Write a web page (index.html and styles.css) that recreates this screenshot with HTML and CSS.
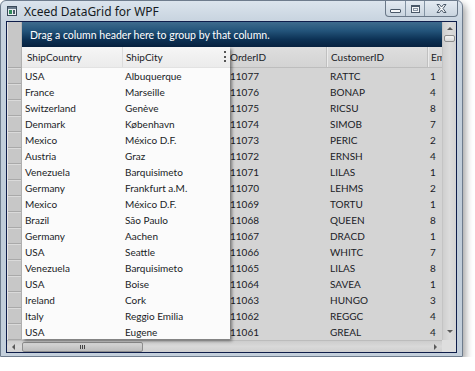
FILE: index.html
```html
<!DOCTYPE html>
<html>
<head>
<meta charset="utf-8">
<link rel="stylesheet" href="styles.css">
</head>
<body>
<div class="window">
  <div class="titlebar">
    <svg class="app-icon" width="10" height="10" viewBox="0 0 10 10">
      <rect x="0.5" y="0.5" width="9" height="9" fill="#e8eef2" stroke="#3a4a5a"/>
      <rect x="1" y="1" width="8" height="2" fill="#6a7a8a"/>
      <rect x="2" y="4" width="3" height="4" fill="#2f8a5a"/>
      <rect x="6" y="4" width="2" height="4" fill="#4a5a6a"/>
    </svg>
    <span class="title">Xceed DataGrid for WPF</span>
    <div class="caption">
      <div class="cbtn min"><span class="min-glyph"></span></div>
      <div class="cbtn max"><span class="max-glyph"></span></div>
      <div class="cbtn close">
        <svg width="11" height="9" viewBox="0 0 11 9">
          <path d="M1 0.5 L3.5 0.5 L5.5 3 L7.5 0.5 L10 0.5 L7 4.5 L10 8.5 L7.5 8.5 L5.5 6 L3.5 8.5 L1 8.5 L4 4.5 Z" fill="#f4f6f8" stroke="#4a5868" stroke-width="1" stroke-linejoin="round"/>
        </svg>
      </div>
    </div>
  </div>
  <div class="client">
    <div class="selectors">
      <div class="sel-top"></div>
      <div class="sel-head"></div>
      <div class="sel"></div><div class="sel"></div><div class="sel"></div><div class="sel"></div>
      <div class="sel"></div><div class="sel"></div><div class="sel"></div><div class="sel"></div>
      <div class="sel"></div><div class="sel"></div><div class="sel"></div><div class="sel"></div>
      <div class="sel"></div><div class="sel"></div><div class="sel"></div><div class="sel"></div>
      <div class="sel"></div>
    </div>
    <div class="group-panel">Drag a column header here to group by that column.</div>
    <div class="main-head">
      <div class="mh spacer"></div>
      <div class="mh c-order">OrderID</div>
      <div class="mh c-cust">CustomerID</div>
      <div class="mh c-em">Em</div>
    </div>
    <div class="main-rows">
      <div class="mrow"><span class="spacer"></span><span class="c-order">11077</span><span class="c-cust">RATTC</span><span class="c-em">1</span></div>
      <div class="mrow"><span class="spacer"></span><span class="c-order">11076</span><span class="c-cust">BONAP</span><span class="c-em">4</span></div>
      <div class="mrow"><span class="spacer"></span><span class="c-order">11075</span><span class="c-cust">RICSU</span><span class="c-em">8</span></div>
      <div class="mrow"><span class="spacer"></span><span class="c-order">11074</span><span class="c-cust">SIMOB</span><span class="c-em">7</span></div>
      <div class="mrow"><span class="spacer"></span><span class="c-order">11073</span><span class="c-cust">PERIC</span><span class="c-em">2</span></div>
      <div class="mrow"><span class="spacer"></span><span class="c-order">11072</span><span class="c-cust">ERNSH</span><span class="c-em">4</span></div>
      <div class="mrow"><span class="spacer"></span><span class="c-order">11071</span><span class="c-cust">LILAS</span><span class="c-em">1</span></div>
      <div class="mrow"><span class="spacer"></span><span class="c-order">11070</span><span class="c-cust">LEHMS</span><span class="c-em">2</span></div>
      <div class="mrow"><span class="spacer"></span><span class="c-order">11069</span><span class="c-cust">TORTU</span><span class="c-em">1</span></div>
      <div class="mrow"><span class="spacer"></span><span class="c-order">11068</span><span class="c-cust">QUEEN</span><span class="c-em">8</span></div>
      <div class="mrow"><span class="spacer"></span><span class="c-order">11067</span><span class="c-cust">DRACD</span><span class="c-em">1</span></div>
      <div class="mrow"><span class="spacer"></span><span class="c-order">11066</span><span class="c-cust">WHITC</span><span class="c-em">7</span></div>
      <div class="mrow"><span class="spacer"></span><span class="c-order">11065</span><span class="c-cust">LILAS</span><span class="c-em">8</span></div>
      <div class="mrow"><span class="spacer"></span><span class="c-order">11064</span><span class="c-cust">SAVEA</span><span class="c-em">1</span></div>
      <div class="mrow"><span class="spacer"></span><span class="c-order">11063</span><span class="c-cust">HUNGO</span><span class="c-em">3</span></div>
      <div class="mrow"><span class="spacer"></span><span class="c-order">11062</span><span class="c-cust">REGGC</span><span class="c-em">4</span></div>
      <div class="mrow"><span class="spacer"></span><span class="c-order">11061</span><span class="c-cust">GREAL</span><span class="c-em">4</span></div>
    </div>
    <div class="vscroll">
      <span class="arrow up"></span>
      <span class="vthumb"></span>
      <span class="vtrack"></span>
      <span class="arrow down"></span>
    </div>
    <div class="hscroll">
      <span class="arrow left"></span>
      <span class="hthumb"><span class="grip"></span></span>
      <span class="htrack"></span>
      <span class="arrow right"></span>
    </div>
    <div class="corner"></div>

    <div class="drag-panel">
      <div class="dp-head">
        <div class="dh c-country">ShipCountry</div>
        <div class="dh c-city">ShipCity<span class="dots"></span></div>
      </div>
      <div class="drow"><span class="c-country">USA</span><span class="c-city">Albuquerque</span></div>
      <div class="drow"><span class="c-country">France</span><span class="c-city">Marseille</span></div>
      <div class="drow"><span class="c-country">Switzerland</span><span class="c-city">Genève</span></div>
      <div class="drow"><span class="c-country">Denmark</span><span class="c-city">København</span></div>
      <div class="drow"><span class="c-country">Mexico</span><span class="c-city">México D.F.</span></div>
      <div class="drow"><span class="c-country">Austria</span><span class="c-city">Graz</span></div>
      <div class="drow"><span class="c-country">Venezuela</span><span class="c-city">Barquisimeto</span></div>
      <div class="drow"><span class="c-country">Germany</span><span class="c-city">Frankfurt a.M.</span></div>
      <div class="drow"><span class="c-country">Mexico</span><span class="c-city">México D.F.</span></div>
      <div class="drow"><span class="c-country">Brazil</span><span class="c-city">São Paulo</span></div>
      <div class="drow"><span class="c-country">Germany</span><span class="c-city">Aachen</span></div>
      <div class="drow"><span class="c-country">USA</span><span class="c-city">Seattle</span></div>
      <div class="drow"><span class="c-country">Venezuela</span><span class="c-city">Barquisimeto</span></div>
      <div class="drow"><span class="c-country">USA</span><span class="c-city">Boise</span></div>
      <div class="drow"><span class="c-country">Ireland</span><span class="c-city">Cork</span></div>
      <div class="drow"><span class="c-country">Italy</span><span class="c-city">Reggio Emilia</span></div>
      <div class="drow"><span class="c-country">USA</span><span class="c-city">Eugene</span></div>
    </div>
  </div>
</div>
</body>
</html>
```

FILE: styles.css
```css
* { box-sizing: border-box; }
body {
  margin: 0;
  background: #ffffff;
  font-family: "Lato", "Noto Sans", sans-serif;
  color: #1a1b26;
}
.window {
  width: 463px;
  height: 357px;
  border: 1px solid #6e7c8d;
  border-radius: 6px 6px 0 0;
  background: linear-gradient(#dbe4ed, #c6d2de 22px, #bfccd9 60%, #c3cfdb);
  box-shadow: 3px 4px 7px rgba(0, 0, 0, 0.35);
  padding: 0 5px 3px 5px;
  display: flex;
  flex-direction: column;
}
.titlebar {
  height: 20px;
  display: flex;
  align-items: center;
  flex: none;
}
.app-icon { margin-left: 1px; flex: none; }
.title {
  margin-left: 7px;
  font-family: "Noto Sans", sans-serif;
  font-size: 12px;
  color: #141a22;
  margin-top: 1px;
}
.caption {
  margin-left: auto;
  margin-right: -1px;
  align-self: flex-start;
  display: flex;
  height: 16px;
  border: 1px solid #6a7888;
  border-top: none;
  border-radius: 0 0 4px 4px;
  overflow: hidden;
  background: linear-gradient(#e4ebf2, #c9d4df);
}
.cbtn {
  display: flex;
  align-items: center;
  justify-content: center;
  height: 100%;
}
.cbtn.min { width: 20px; border-right: 1px solid #8393a3; }
.cbtn.max { width: 19px; border-right: 1px solid #8393a3; }
.cbtn.close { width: 32px; }
.min-glyph {
  width: 11px; height: 4px;
  border: 1px solid #4a5868;
  border-radius: 1px;
  background: #f4f6f8;
  margin-top: 4px;
}
.max-glyph {
  width: 9px; height: 8px;
  border: 1px solid #4a5868;
  border-top-width: 2px;
  background: #f4f6f8;
  box-shadow: inset 0 0 0 1px #f4f6f8, inset 0 0 0 2px #8a96a4;
}

.client {
  position: relative;
  height: 332px;
  border: 1px solid #0e1d4a;
  background: #d4d4d4;
  display: grid;
  grid-template-columns: 15px 420px 14px;
  grid-template-rows: 25px 21px 272px 12px;
  overflow: hidden;
  font-size: 10px;
}
.selectors {
  grid-column: 1;
  grid-row: 1 / 4;
  background: #c7c7c7;
  border-left: 1px solid #e6e6e6;
  border-right: 1px solid #b4b4b4;
  display: flex;
  flex-direction: column;
}
.sel-top { height: 25px; }
.sel-head { height: 21px; border-bottom: 1px solid #a9a9a9; }
.sel {
  height: 16px;
  border-bottom: 1px solid #a9a9a9;
  border-top: 1px solid #dadada;
}
.group-panel {
  grid-column: 2 / 3;
  grid-row: 1;
  background: linear-gradient(#3e6b8d, #23547a 35%, #0c3154 70%, #07213f);
  color: #ffffff;
  font-size: 10.5px;
  padding-left: 8px;
  display: flex;
  align-items: center;
  padding-top: 1px;
}
.main-head {
  grid-column: 2;
  grid-row: 2;
  display: flex;
  background: linear-gradient(#dedede, #d3d3d3);
  border-bottom: 1px solid #bdbdbd;
}
.mh {
  padding-left: 4px;
  display: flex;
  align-items: center;
  border-right: 1px solid #c0c0c0;
  box-shadow: 1px 0 0 #ebebeb;
}
.spacer { width: 204px; flex: none; }
.c-order { width: 101px; flex: none; }
.c-cust { width: 101px; flex: none; }
.c-em { flex: 1; }
.mh.c-em { border-right: none; box-shadow: none; padding-left: 3px; }
.main-rows {
  grid-column: 2;
  grid-row: 3;
  display: flex;
  flex-direction: column;
}
.mrow {
  height: 16px;
  display: flex;
  align-items: center;
}
.mrow span { padding-left: 4px; white-space: nowrap; }
.mrow .c-order { padding-left: 4px; }
.mrow .c-cust { padding-left: 3px; }
.mrow .c-em { padding-left: 2px; }

.vscroll {
  grid-column: 3;
  grid-row: 1 / 4;
  background: linear-gradient(90deg, #cfcfcf, #dcdcdc 50%, #d2d2d2);
  border-left: 1px solid #c4c4c4;
  display: flex;
  flex-direction: column;
  align-items: center;
}
.vtrack, .htrack { flex: 1; }
.vthumb {
  width: 11px;
  height: 7px;
  border: 1px solid #8e8e8e;
  border-radius: 2px;
  background: linear-gradient(#f4f4f4, #d8d8d8);
  margin-top: 5px;
}
.arrow { width: 0; height: 0; flex: none; }
.arrow.up {
  margin-top: 5px;
  border-left: 3px solid transparent;
  border-right: 3px solid transparent;
  border-bottom: 3px solid #5a5a5a;
}
.arrow.down {
  margin-bottom: 7px;
  border-left: 3px solid transparent;
  border-right: 3px solid transparent;
  border-top: 3px solid #5a5a5a;
}
.hscroll {
  grid-column: 1 / 3;
  grid-row: 4;
  background: linear-gradient(#cdcdcd, #d9d9d9 50%, #cfcfcf);
  border-top: 1px solid #bcbcbc;
  display: flex;
  align-items: center;
}
.arrow.left {
  margin-left: 5px;
  border-top: 3px solid transparent;
  border-bottom: 3px solid transparent;
  border-right: 3px solid #5a5a5a;
}
.hthumb {
  margin-left: 7px;
  width: 121px;
  height: 10px;
  border: 1px solid #8e8e8e;
  border-radius: 2px;
  background: linear-gradient(#d6d6d6, #bcbcbc);
  display: flex;
  align-items: center;
  justify-content: center;
}
.grip {
  width: 5px;
  height: 4px;
  border-left: 1px solid #444;
  border-right: 1px solid #444;
  position: relative;
}
.grip::after {
  content: "";
  position: absolute;
  left: 1px;
  top: 0;
  width: 1px;
  height: 4px;
  background: #444;
}
.arrow.right {
  margin-right: 5px;
  border-top: 3px solid transparent;
  border-bottom: 3px solid transparent;
  border-left: 3px solid #5a5a5a;
}
.corner {
  grid-column: 3;
  grid-row: 4;
  background: #dedede;
}

.drag-panel {
  position: absolute;
  left: 15px;
  top: 25px;
  width: 208px;
  height: 292px;
  background: #fbfbfb;
  box-shadow: 2px 2px 3px rgba(0, 0, 0, 0.45);
  display: flex;
  flex-direction: column;
}
.dp-head {
  height: 21px;
  display: flex;
  background: linear-gradient(#f6f6f6, #ebebeb);
  border-bottom: 1px solid #e2e2e2;
  flex: none;
}
.dh {
  display: flex;
  align-items: center;
  padding-left: 5px;
  position: relative;
}
.dh.c-country { width: 101px; border-right: 1px solid #dcdcdc; }
.dh.c-city { flex: 1; padding-left: 3px; }
.dots {
  position: absolute;
  right: 4px;
  top: 4px;
  height: 11px;
  border-left: 2px dotted #555;
}
.drow {
  height: 16px;
  display: flex;
  align-items: center;
  flex: none;
}
.drow span { white-space: nowrap; }
.drow .c-country { width: 101px; padding-left: 3px; }
.drow .c-city { padding-left: 2px; }
```
